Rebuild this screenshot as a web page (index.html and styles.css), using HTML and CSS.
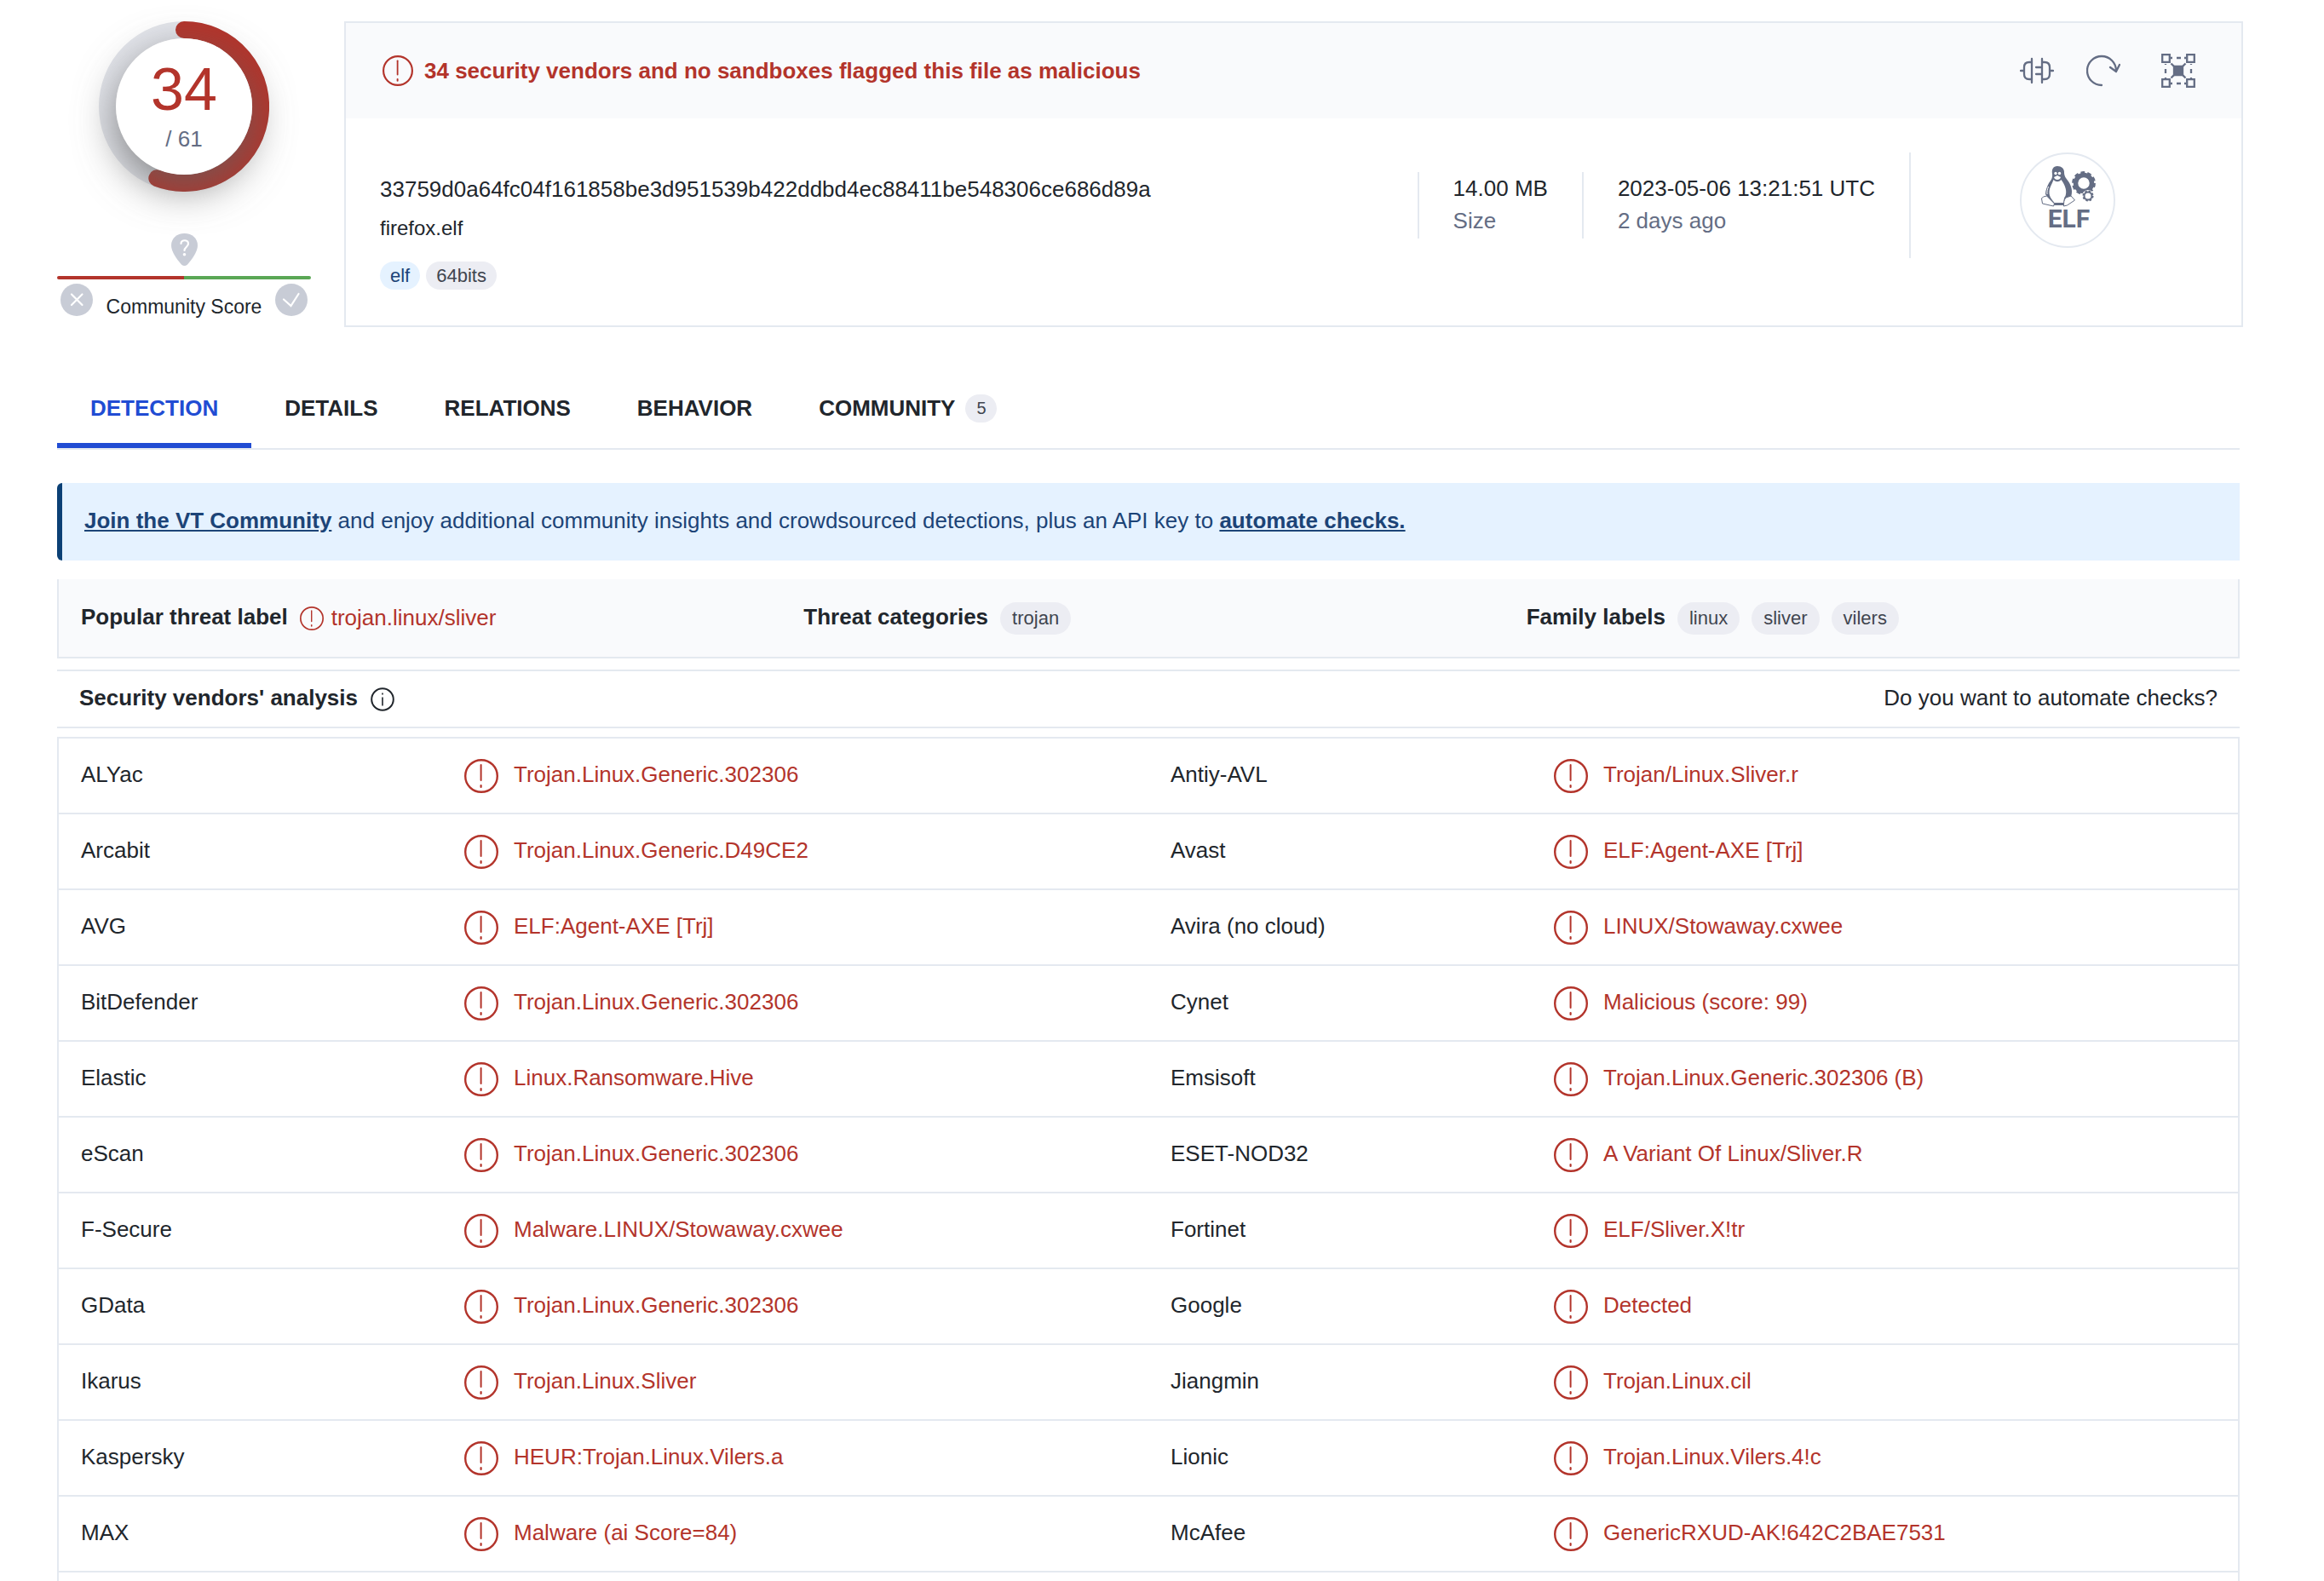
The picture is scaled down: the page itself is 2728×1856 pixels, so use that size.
FILE: index.html
```
<!DOCTYPE html>
<html lang="en">
<head>
    <meta charset="utf-8">
    <title>VirusTotal - File - firefox.elf</title>
    <link rel="stylesheet" href="styles.css">
</head>
<body>
    <!-- icons shared by the whole page -->
    <svg class="sprite" aria-hidden="true">
        <symbol id="alert" viewBox="0 0 40 40">
            <circle cx="20" cy="20" r="18.8" fill="none" stroke="currentColor" stroke-width="2.4"/>
            <path d="M19.6 7v18" fill="none" stroke="currentColor" stroke-width="2" stroke-linecap="round"/>
            <path d="M19.6 31v2" fill="none" stroke="currentColor" stroke-width="2.2" stroke-linecap="round"/>
        </symbol>
        <symbol id="info" viewBox="0 0 28 28">
            <circle cx="14" cy="14" r="12.8" fill="none" stroke="currentColor" stroke-width="2"/>
            <path d="M14 11.5v10M14 6.5v2" fill="none" stroke="currentColor" stroke-width="1.6"/>
        </symbol>
    </svg>

    <header class="summary">
        <div class="score">
            <div class="ring">
                <svg class="ring-track" viewBox="0 0 200 200">
                    <circle cx="100" cy="100" r="90" fill="none" stroke="#e3e5eb" stroke-width="20"/>
                    <path d="M100 10A90 90 0 1 1 68.3 184.2" fill="none" stroke="#b3342b" stroke-width="20" stroke-linecap="round"/>
                </svg>
                <div class="ring-value">
                    <span class="positives">34</span>
                    <span class="total">/ 61</span>
                </div>
            </div>
            <svg class="pin" viewBox="0 0 31 38">
                <path d="M15.5 0C6.5 0 0 6 0 14c0 7.5 7 17 12 22.5q3.5 3 7 0C24 31 31 21.5 31 14 31 6 24.5 0 15.500 0z" fill="#c8ccd6"/>
                <path d="M11.5 12c0-5 8.500-5 8.500 0 0 4-4.500 4-4.500 8" fill="none" stroke="#fff" stroke-width="2.2" stroke-linecap="round"/>
                <circle cx="15.5" cy="24.800" r="1.800" fill="#fff"/>
            </svg>
            <div class="score-bar"></div>
            <div class="community">
                <svg viewBox="0 0 38 38"><circle cx="19" cy="19" r="19" fill="#c8ccd6"/><path d="M13 12.5l12.500 12.500M25.500 12.500L13 25" stroke="#fff" stroke-width="2.2" stroke-linecap="round"/></svg>
                <span>Community Score</span>
                <svg viewBox="0 0 38 38"><circle cx="19" cy="19" r="19" fill="#c8ccd6"/><path d="M10 18.500l8.500 7.500 9-14" fill="none" stroke="#fff" stroke-width="2.200" stroke-linecap="round"/></svg>
            </div>
        </div>

        <section class="card">
            <div class="card-head">
                <svg class="icon-title"><use href="#alert"/></svg>
                <h1>34 security vendors and no sandboxes flagged this file as malicious</h1>
                <div class="actions">
                    <button type="button" aria-label="Similar files">
                        <svg viewBox="0 0 40 40" fill="none" stroke="currentColor" stroke-width="2.3" stroke-linecap="round">
                            <path d="M14 6v28M26 6v28M14 10h-3q-6 0-6 6v8q0 6 6 6h3M26 10h3q6 0 6 6v8q0 6-6 6h-3M1 20h4M35 20h4M19 16h7M19 24h7"/>
                        </svg>
                    </button>
                    <button type="button" aria-label="Reanalyze">
                        <svg viewBox="0 0 40 40" fill="none" stroke="currentColor" stroke-width="2.3" stroke-linecap="round" stroke-linejoin="round">
                            <path d="M18 37A17 17 0 1 1 35 20M28 16l7 5 4-8"/>
                        </svg>
                    </button>
                    <button type="button" class="graph" aria-label="Graph">
                        <svg viewBox="0 0 40 40" fill="none" stroke="currentColor" stroke-width="2.3">
                            <path d="M1.200 1.200h8.600v8.600H1.200zM30.200 1.200h8.600v8.600h-8.600zM1.200 30.200h8.600v8.600H1.200zM30.200 30.200h8.600v8.600h-8.600z"/>
                            <path d="M18 5h5M18 35h5M5 18v5M35 18v5M11 5h2M27 5h2M11 35h2M27 35h2M5 12v1M5 28v1M35 12v1M35 28v1M11.500 11.500l17 17M28.500 11.500l-17 17"/>
                            <path d="M15 15h10v10H15z" fill="currentColor"/>
                        </svg>
                    </button>
                </div>
            </div>
            <div class="card-body">
                <div class="file">
                    <div class="hash">33759d0a64fc04f161858be3d951539b422ddbd4ec88411be548306ce686d89a</div>
                    <div class="name">firefox.elf</div>
                    <div class="tags">
                        <a class="tag tag-blue" href="#">elf</a>
                        <a class="tag" href="#">64bits</a>
                    </div>
                </div>
                <div class="meta">
                    <div>14.00 MB</div>
                    <div class="muted">Size</div>
                </div>
                <div class="meta">
                    <div>2023-05-06 13:21:51 UTC</div>
                    <div class="muted">2 days ago</div>
                </div>
                <div class="file-type">
                    <svg viewBox="0 0 112 112">
                        <circle cx="56" cy="56" r="55" fill="#fff" stroke="#e4e9f0" stroke-width="2"/>
                        <!-- penguin -->
                        <path d="M44 16c-5 0-7 4-6 9 .5 5-1 7-4 11-2 4-4 8-4 13l9 12h14l7-9c2-6 1-12-3-18-3-4-5-6-5-11 0-4-3-7-8-7z" fill="#646d84"/>
                        <path d="M39.500 32c-2 6-5 9-5 15 0 5 3 8 6 12h11c0-3 0-6 2-8 2-6 0-12-5-19-3 3-6 3-9 0z" fill="#fff"/>
                        <path d="M33.500 40c-1 3-2 6-1.500 9" fill="none" stroke="#fff"/>
                        <path d="M40 29l4-2 4 2c-1 4-7 4-8 0z" fill="#fff"/>
                        <circle cx="42" cy="24.500" r="1.700" fill="#fff"/>
                        <circle cx="46.500" cy="24.500" r="1.700" fill="#fff"/>
                        <path d="M40 59h13l-2 3H40z" fill="#646d84"/>
                        <path d="M25.500 54l2-2 4-1 9 9-1 3-13-3zM54 53l6-2 4.500 5-9 6-4 1c0-4 0-7 2.500-10z" fill="#fff" stroke="#646d84"/>
                        <!-- gears -->
                        <circle cx="75" cy="36" r="9.500" fill="none" stroke="#646d84" stroke-width="5.500"/>
                        <circle cx="75" cy="36" r="12.500" fill="none" stroke="#646d84" stroke-width="2.800" stroke-dasharray="4.800 3.054"/>
                        <circle cx="80" cy="51" r="7" fill="#fff"/>
                        <circle cx="80" cy="51" r="4.500" fill="none" stroke="#646d84" stroke-width="2"/>
                        <circle cx="80" cy="51" r="5.800" fill="none" stroke="#646d84" stroke-width="1.500" stroke-dasharray="2.500 2.055"/>
                        <text x="57.500" y="88" text-anchor="middle">ELF</text>
                    </svg>
                </div>
            </div>
        </section>
    </header>

    <main>
        <nav class="tabs">
            <a class="active" href="#">DETECTION</a>
            <a href="#">DETAILS</a>
            <a href="#">RELATIONS</a>
            <a href="#">BEHAVIOR</a>
            <a href="#">COMMUNITY <span class="count">5</span></a>
        </nav>

        <p class="banner"><a href="#">Join the VT Community</a> and enjoy additional community insights and crowdsourced detections, plus an API key to <a href="#">automate checks.</a></p>

        <section class="threat">
            <div>
                <strong>Popular threat label</strong>
                <span class="label"><svg class="icon-small"><use href="#alert"/></svg>trojan.linux/sliver</span>
            </div>
            <div>
                <strong>Threat categories</strong>
                <span class="pill">trojan</span>
            </div>
            <div>
                <strong>Family labels</strong>
                <span class="pill">linux</span>
                <span class="pill">sliver</span>
                <span class="pill">vilers</span>
            </div>
        </section>

        <div class="analysis">
            <h2>Security vendors' analysis</h2>
            <svg class="icon-small"><use href="#info"/></svg>
            <a href="#">Do you want to automate checks?</a>
        </div>

        <div class="results">
            <table>
                <colgroup><col class="vendor"><col><col class="vendor"><col></colgroup>
                <tbody id="rows"></tbody>
            </table>
        </div>
    </main>

    <script>
        const detections = [
            ['ALYac', 'Trojan.Linux.Generic.302306', 'Antiy-AVL', 'Trojan/Linux.Sliver.r'],
            ['Arcabit', 'Trojan.Linux.Generic.D49CE2', 'Avast', 'ELF:Agent-AXE [Trj]'],
            ['AVG', 'ELF:Agent-AXE [Trj]', 'Avira (no cloud)', 'LINUX/Stowaway.cxwee'],
            ['BitDefender', 'Trojan.Linux.Generic.302306', 'Cynet', 'Malicious (score: 99)'],
            ['Elastic', 'Linux.Ransomware.Hive', 'Emsisoft', 'Trojan.Linux.Generic.302306 (B)'],
            ['eScan', 'Trojan.Linux.Generic.302306', 'ESET-NOD32', 'A Variant Of Linux/Sliver.R'],
            ['F-Secure', 'Malware.LINUX/Stowaway.cxwee', 'Fortinet', 'ELF/Sliver.X!tr'],
            ['GData', 'Trojan.Linux.Generic.302306', 'Google', 'Detected'],
            ['Ikarus', 'Trojan.Linux.Sliver', 'Jiangmin', 'Trojan.Linux.cil'],
            ['Kaspersky', 'HEUR:Trojan.Linux.Vilers.a', 'Lionic', 'Trojan.Linux.Vilers.4!c'],
            ['MAX', 'Malware (ai Score=84)', 'McAfee', 'GenericRXUD-AK!642C2BAE7531']
        ];

        function verdict(text) {
            return '<td><div class="result"><svg><use href="#alert"/></svg><span>' + text + '</span></div></td>';
        }

        document.getElementById('rows').innerHTML = detections.map(function (d) {
            return '<tr><td>' + d[0] + '</td>' + verdict(d[1]) + '<td>' + d[2] + '</td>' + verdict(d[3]) + '</tr>';
        }).join('');
    </script>
</body>
</html>
```

FILE: styles.css
```
* {
    box-sizing: border-box;
}

body {
    font-family: "Liberation Sans", Helvetica, Arial, sans-serif;
    font-size: 26px;
    line-height: 30px;
    color: #21262c;
    background-color: #fff;
    margin: 0;
}

a {
    color: inherit;
    text-decoration: none;
}

h1, h2 {
    font-size: 26px;
    margin: 0;
}

.sprite {
    display: none;
}

/* summary */
.summary {
    display: flex;
    gap: 39px;
    padding: 25px 95px 0 67px;
}

.score {
    width: 298px;
    flex: none;
    display: flex;
    flex-direction: column;
    align-items: center;
}

.ring {
    width: 200px;
    height: 200px;
    display: grid;
    place-items: center;
}

.ring-track, .ring-value {
    grid-area: 1 / 1;
}

.ring-track {
    width: 200px;
    height: 200px;
}

.ring-value {
    position: relative;
    width: 160px;
    height: 160px;
    border-radius: 50%;
    background-color: #fff;
    box-shadow: 0 16px 48px rgba(97, 97, 97, 0.75);
    display: flex;
    flex-direction: column;
    align-items: center;
    padding-top: 20px;
}

.positives {
    font-size: 70px;
    line-height: 80px;
    color: #b3342b;
}

.total {
    line-height: 36px;
    color: #646d84;
}

.pin {
    width: 31px;
    height: 38px;
    margin-top: 49px;
    position: relative;
}

.score-bar {
    width: 100%;
    height: 4px;
    margin-top: 12px;
    border-radius: 2px;
    background: linear-gradient(to right, #b3342b 50%, #5aa755 50%);
}

.community {
    width: 100%;
    display: flex;
    justify-content: space-between;
    padding: 5px 4px 0;
    font-size: 23px;
}

.community svg {
    width: 38px;
    height: 38px;
}

.community span {
    padding-top: 12px;
}

.card {
    flex: 1;
    border: 2px solid #e4e9f0;
}

.card-head {
    display: flex;
    align-items: center;
    height: 112px;
    padding: 0 54px 0 43px;
    background-color: #f9fafc;
    color: #b3342b;
}

.icon-title {
    width: 36px;
    height: 36px;
    margin-right: 13px;
}

.actions {
    margin-left: auto;
    display: flex;
    gap: 38px;
}

.actions button {
    display: flex;
    padding: 0;
    border: 0;
    background: none;
    color: #646d84;
    cursor: pointer;
}

.actions .graph {
    margin-left: 10px;
}

.actions svg {
    width: 40px;
    height: 40px;
}

.card-body {
    display: flex;
    align-items: flex-start;
    height: 243px;
    padding: 40px 0 0 40px;
}

.file {
    flex: 1;
    padding-top: 28px;
}

.name {
    font-size: 24px;
    margin-top: 16px;
}

.tags {
    display: flex;
    gap: 7px;
    margin-top: 24px;
}

.tag {
    padding: 0 12px;
    border-radius: 17px;
    background-color: #ecedf3;
    font-size: 22px;
    line-height: 33px;
    color: #40454f;
}

.tag-blue {
    background-color: #e5f2ff;
    color: #1c4477;
}

.meta {
    height: 78px;
    margin-top: 23px;
    padding: 0 40px;
    border-left: 2px solid #e4e9f0;
    line-height: 38px;
    white-space: nowrap;
}

.muted {
    color: #646d84;
}

.file-type {
    width: 390px;
    height: 124px;
    padding-left: 128px;
    border-left: 2px solid #e4e9f0;
}

.file-type svg {
    width: 112px;
    height: 112px;
}

.file-type text {
    font-family: Roboto, sans-serif;
    font-size: 30px;
    font-weight: bold;
    fill: #646d84;
}

/* tabs and everything below */
main {
    padding: 0 99px 0 67px;
}

.tabs {
    display: flex;
    margin-top: 64px;
    border-bottom: 2px solid #e4e9f0;
}

.tabs a {
    display: flex;
    align-items: center;
    height: 78px;
    padding: 0 39px 10px;
    border-bottom: 6px solid transparent;
    font-weight: bold;
}

.tabs .active {
    color: #214cd3;
    border-color: #214cd3;
}

.count {
    width: 37px;
    margin-left: 12px;
    border-radius: 17px;
    background-color: #ecedf3;
    color: #40454f;
    font-size: 20px;
    font-weight: normal;
    line-height: 33px;
    text-align: center;
}

.banner {
    margin: 39px 0 22px;
    padding: 29px 26px 32px;
    border-left: 6px solid #0b4075;
    border-radius: 6px 0 0 6px;
    background-color: #e5f2ff;
    color: #1c4477;
}

.banner a {
    font-weight: bold;
    text-decoration: underline;
}

.threat {
    display: grid;
    grid-template-columns: repeat(3, 1fr);
    column-gap: 13px;
    height: 93px;
    padding-left: 26px;
    border: 2px solid #e4e9f0;
    border-top: 0;
    background-color: #f9fafc;
}

.threat div {
    display: flex;
    align-items: center;
    gap: 14px;
}

.threat strong {
    padding-bottom: 3px;
}

.label {
    display: flex;
    gap: 9px;
    line-height: 26px;
    color: #b3342b;
}

.icon-small {
    width: 28px;
    height: 28px;
}

.pill {
    padding: 0 14px;
    border-radius: 19px;
    background-color: #ecedf3;
    color: #40454f;
    font-size: 22px;
    line-height: 38px;
}

.analysis {
    display: flex;
    align-items: center;
    height: 69px;
    margin: 13px 0 10px;
    padding: 0 26px;
    border: 2px solid #e4e9f0;
    border-width: 2px 0;
}

.analysis h2, .analysis a {
    padding-bottom: 3px;
}

.analysis .icon-small {
    margin-left: 15px;
}

.analysis a {
    margin-left: auto;
}

.results {
    border: 2px solid #e4e9f0;
    border-bottom: 0;
    padding-bottom: 10px;
}

table {
    width: 100%;
    table-layout: fixed;
    border-spacing: 0;
}

/* the verdict columns share what is left */
.vendor {
    width: 476px;
}

td {
    height: 89px;
    padding: 0 0 4px 26px;
    border-bottom: 2px solid #e4e9f0;
}

td:nth-child(even) {
    padding: 0;
}

.result {
    display: flex;
    gap: 18px;
    color: #b3342b;
}

.result svg {
    width: 40px;
    height: 40px;
}

.result span {
    padding-top: 3px;
}
```
